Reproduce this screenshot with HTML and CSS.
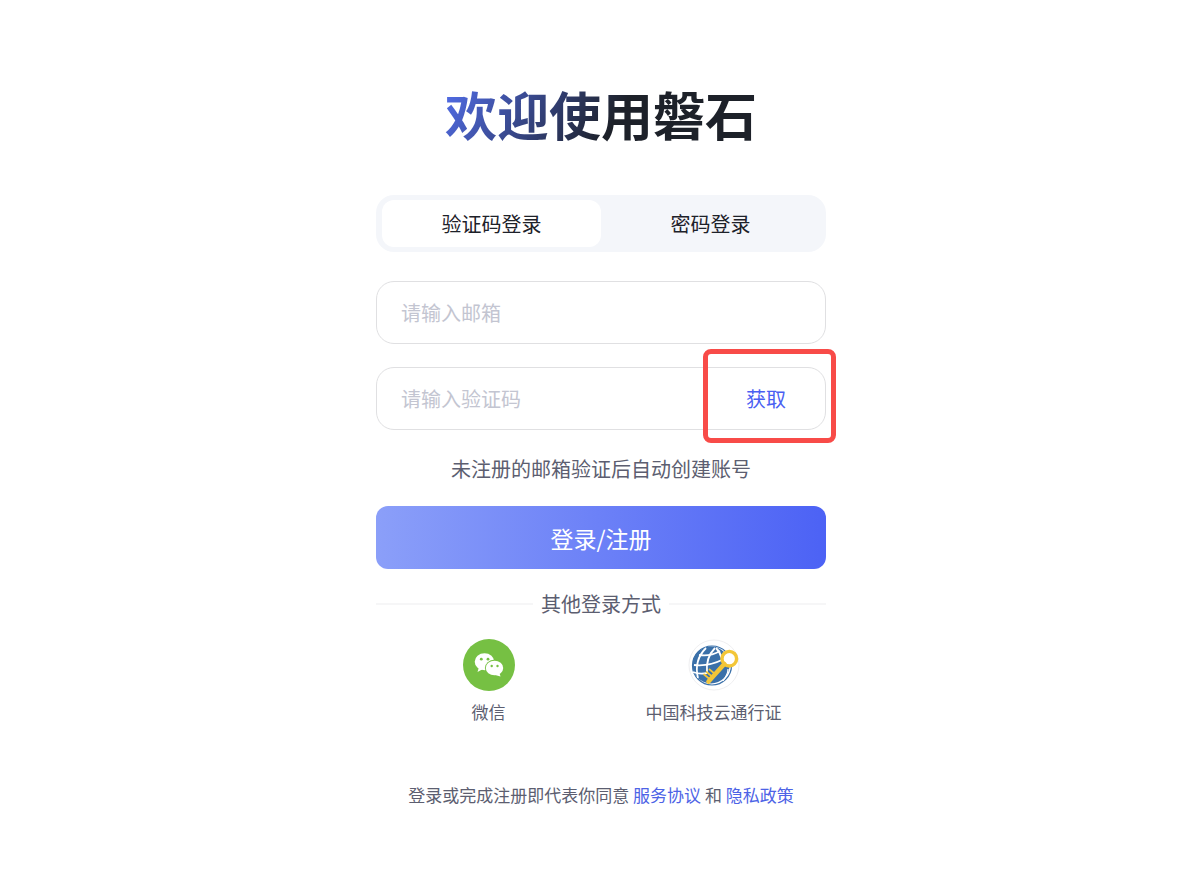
FILE: index.html
```html
<!DOCTYPE html>
<html lang="zh-CN">

<head>
    <meta charset="UTF-8">
    <meta name="viewport" content="width=device-width, initial-scale=1.0">
    <title>登录 - 磐石</title>
    <link rel="stylesheet" href="styles.css">
</head>

<body>
    <main class="login">
        <h1 class="titulo">欢迎使用磐石</h1>

        <div class="tabs">
            <button type="button" class="tab active">验证码登录</button>
            <button type="button" class="tab">密码登录</button>
        </div>

        <form class="form">
            <input class="field" type="email" aria-label="邮箱" placeholder="请输入邮箱">

            <div class="field code">
                <input class="code-input" type="text" aria-label="验证码" placeholder="请输入验证码">
                <button type="button" class="code-btn">获取</button>
                <span class="highlight"></span>
            </div>

            <p class="tip">未注册的邮箱验证后自动创建账号</p>

            <button type="submit" class="submit">登录/注册</button>
        </form>

        <div class="divider">其他登录方式</div>

        <div class="others">
            <a class="other" href="#">
                <svg class="icon" viewBox="0 0 52 52" aria-hidden="true">
                    <circle cx="26" cy="26" r="26" fill="#76c043" />
                    <ellipse cx="21.500" cy="22.800" rx="9.800" ry="8.500" fill="#fff" />
                    <path fill="#fff" d="M16 28l-1.500 5 5.500-3z" />
                    <ellipse cx="31.500" cy="29" rx="9.600" ry="8.200" fill="#76c043" />
                    <ellipse cx="31.500" cy="29" rx="8.700" ry="7.300" fill="#fff" />
                    <path fill="#fff" d="M32 36l5.500 1.500-1.200-4z" />
                    <g fill="#76c043">
                        <circle cx="18.300" cy="20.200" r="1.400" />
                        <circle cx="25" cy="20.200" r="1.400" />
                        <circle cx="28.700" cy="27" r="1.200" />
                        <circle cx="34.500" cy="27" r="1.200" />
                    </g>
                </svg>
                <span>微信</span>
            </a>
            <a class="other" href="#">
                <svg class="icon" viewBox="0 0 52 52" aria-hidden="true">
                    <circle cx="26" cy="26" r="25" fill="#fff" stroke="#efeff1" />
                    <circle cx="24" cy="26.500" r="19.500" fill="#fff" stroke="#3a70a9" stroke-width="1.200" />
                    <circle cx="23" cy="26" r="18.500" fill="#3a70a9" />
                    <g fill="none" stroke="#fff" stroke-width="1.800">
                        <path d="M11 16c6 1 14 0 21-4" />
                        <path d="M6 26c8 1 20-1 30-6" />
                        <path d="M5 33c5 2 9 2 14 1" />
                        <path d="M27 9c-6 6-9 15-8 25" />
                        <path d="M18 9c-8 8-11 18-8 30" />
                        <path d="M28 9c3 3 5 7 6 11" />
                    </g>
                    <path d="M35 42c3-4 5-8 5-12" fill="none" stroke="#fff" stroke-width="1.200" />
                    <circle cx="41.300" cy="19.700" r="7.300" fill="#fff" stroke="#f3c638" stroke-width="3.400" />
                    <path d="M36.300 25L20.500 42.500" fill="none" stroke="#f3c638" stroke-width="4.600" stroke-linecap="round" />
                    <path d="M15.500 35l6 5M18 32.500l6 5M21 30l6 5" fill="none" stroke="#f3c638" stroke-width="1.700" />
                </svg>
                <span>中国科技云通行证</span>
            </a>
        </div>

        <p class="agreement">登录或完成注册即代表你同意 <a href="#">服务协议</a> 和 <a href="#">隐私政策</a></p>
    </main>
</body>

</html>
```
FILE: styles.css
```css
* {
    box-sizing: border-box;
    padding: 0;
    margin: 0;
}

body {
    padding-left: 2px;
    background-color: #fff;
    color: #1d2129;
    font-family: "Noto Sans CJK SC", sans-serif;
    font-size: 20px;
    line-height: 30px;
}

button,
input {
    font: inherit;
    border: none;
    background: none;
}

button {
    cursor: pointer;
}

a {
    color: #4d63e6;
    text-decoration: none;
}

.login {
    display: flex;
    flex-direction: column;
    align-items: center;
    max-width: 450px;
    margin: 0 auto;
    padding: 74px 0 40px;
}

.titulo {
    font-size: 52px;
    line-height: 80px;
    background: linear-gradient(120deg, #5470f0 0%, #1d2129 55%);
    -webkit-background-clip: text;
    background-clip: text;
    color: transparent;
}

.tabs {
    display: flex;
    width: 100%;
    margin-top: 41px;
    padding: 5px 6px;
    border-radius: 18px;
    background-color: #f4f6fa;
}

.tab {
    flex: 1;
    height: 47px;
    border-radius: 12px;
    color: #1d2129;
}

.tab.active {
    background-color: #fff;
}

.form {
    display: flex;
    flex-direction: column;
    width: 100%;
    margin-top: 29px;
}

.field {
    width: 100%;
    height: 63px;
    padding: 0 24px;
    border: 1px solid #e0e0e2;
    border-radius: 18px;
}

.field::placeholder,
.code-input::placeholder {
    color: #c3c5d1;
    opacity: 1;
}

.code {
    position: relative;
    display: flex;
    margin-top: 23px;
    padding-right: 0;
}

.code-input {
    flex: 1;
    min-width: 0;
}

.code-btn {
    width: 118px;
    color: #4a5ff2;
}

/* red frame around the get-code button */
.highlight {
    position: absolute;
    top: -19px;
    right: -11px;
    width: 133px;
    height: 94px;
    border: 5px solid #f84b48;
    border-radius: 8px;
    pointer-events: none;
}

.tip {
    margin-top: 24px;
    text-align: center;
    color: #5c5e70;
}

.submit {
    height: 63px;
    margin-top: 22px;
    border-radius: 12px;
    background: linear-gradient(90deg, #8b9ff9, #4c62f5);
    color: #fff;
    font-size: 23px;
}

.divider {
    display: flex;
    align-items: center;
    gap: 8px;
    width: 100%;
    margin-top: 20px;
    color: #5c5e70;
}

.divider::before,
.divider::after {
    content: "";
    flex: 1;
    height: 2px;
    background-color: #f6f6f7;
}

.others {
    display: grid;
    grid-template-columns: 1fr 1fr;
    width: 100%;
    margin-top: 20px;
}

.other {
    display: flex;
    flex-direction: column;
    align-items: center;
    gap: 6px;
    color: #5c5e70;
    font-size: 17px;
}

.icon {
    width: 52px;
    height: 52px;
}

.agreement {
    margin-top: 53px;
    color: #5c5e70;
    font-size: 17px;
}
```
